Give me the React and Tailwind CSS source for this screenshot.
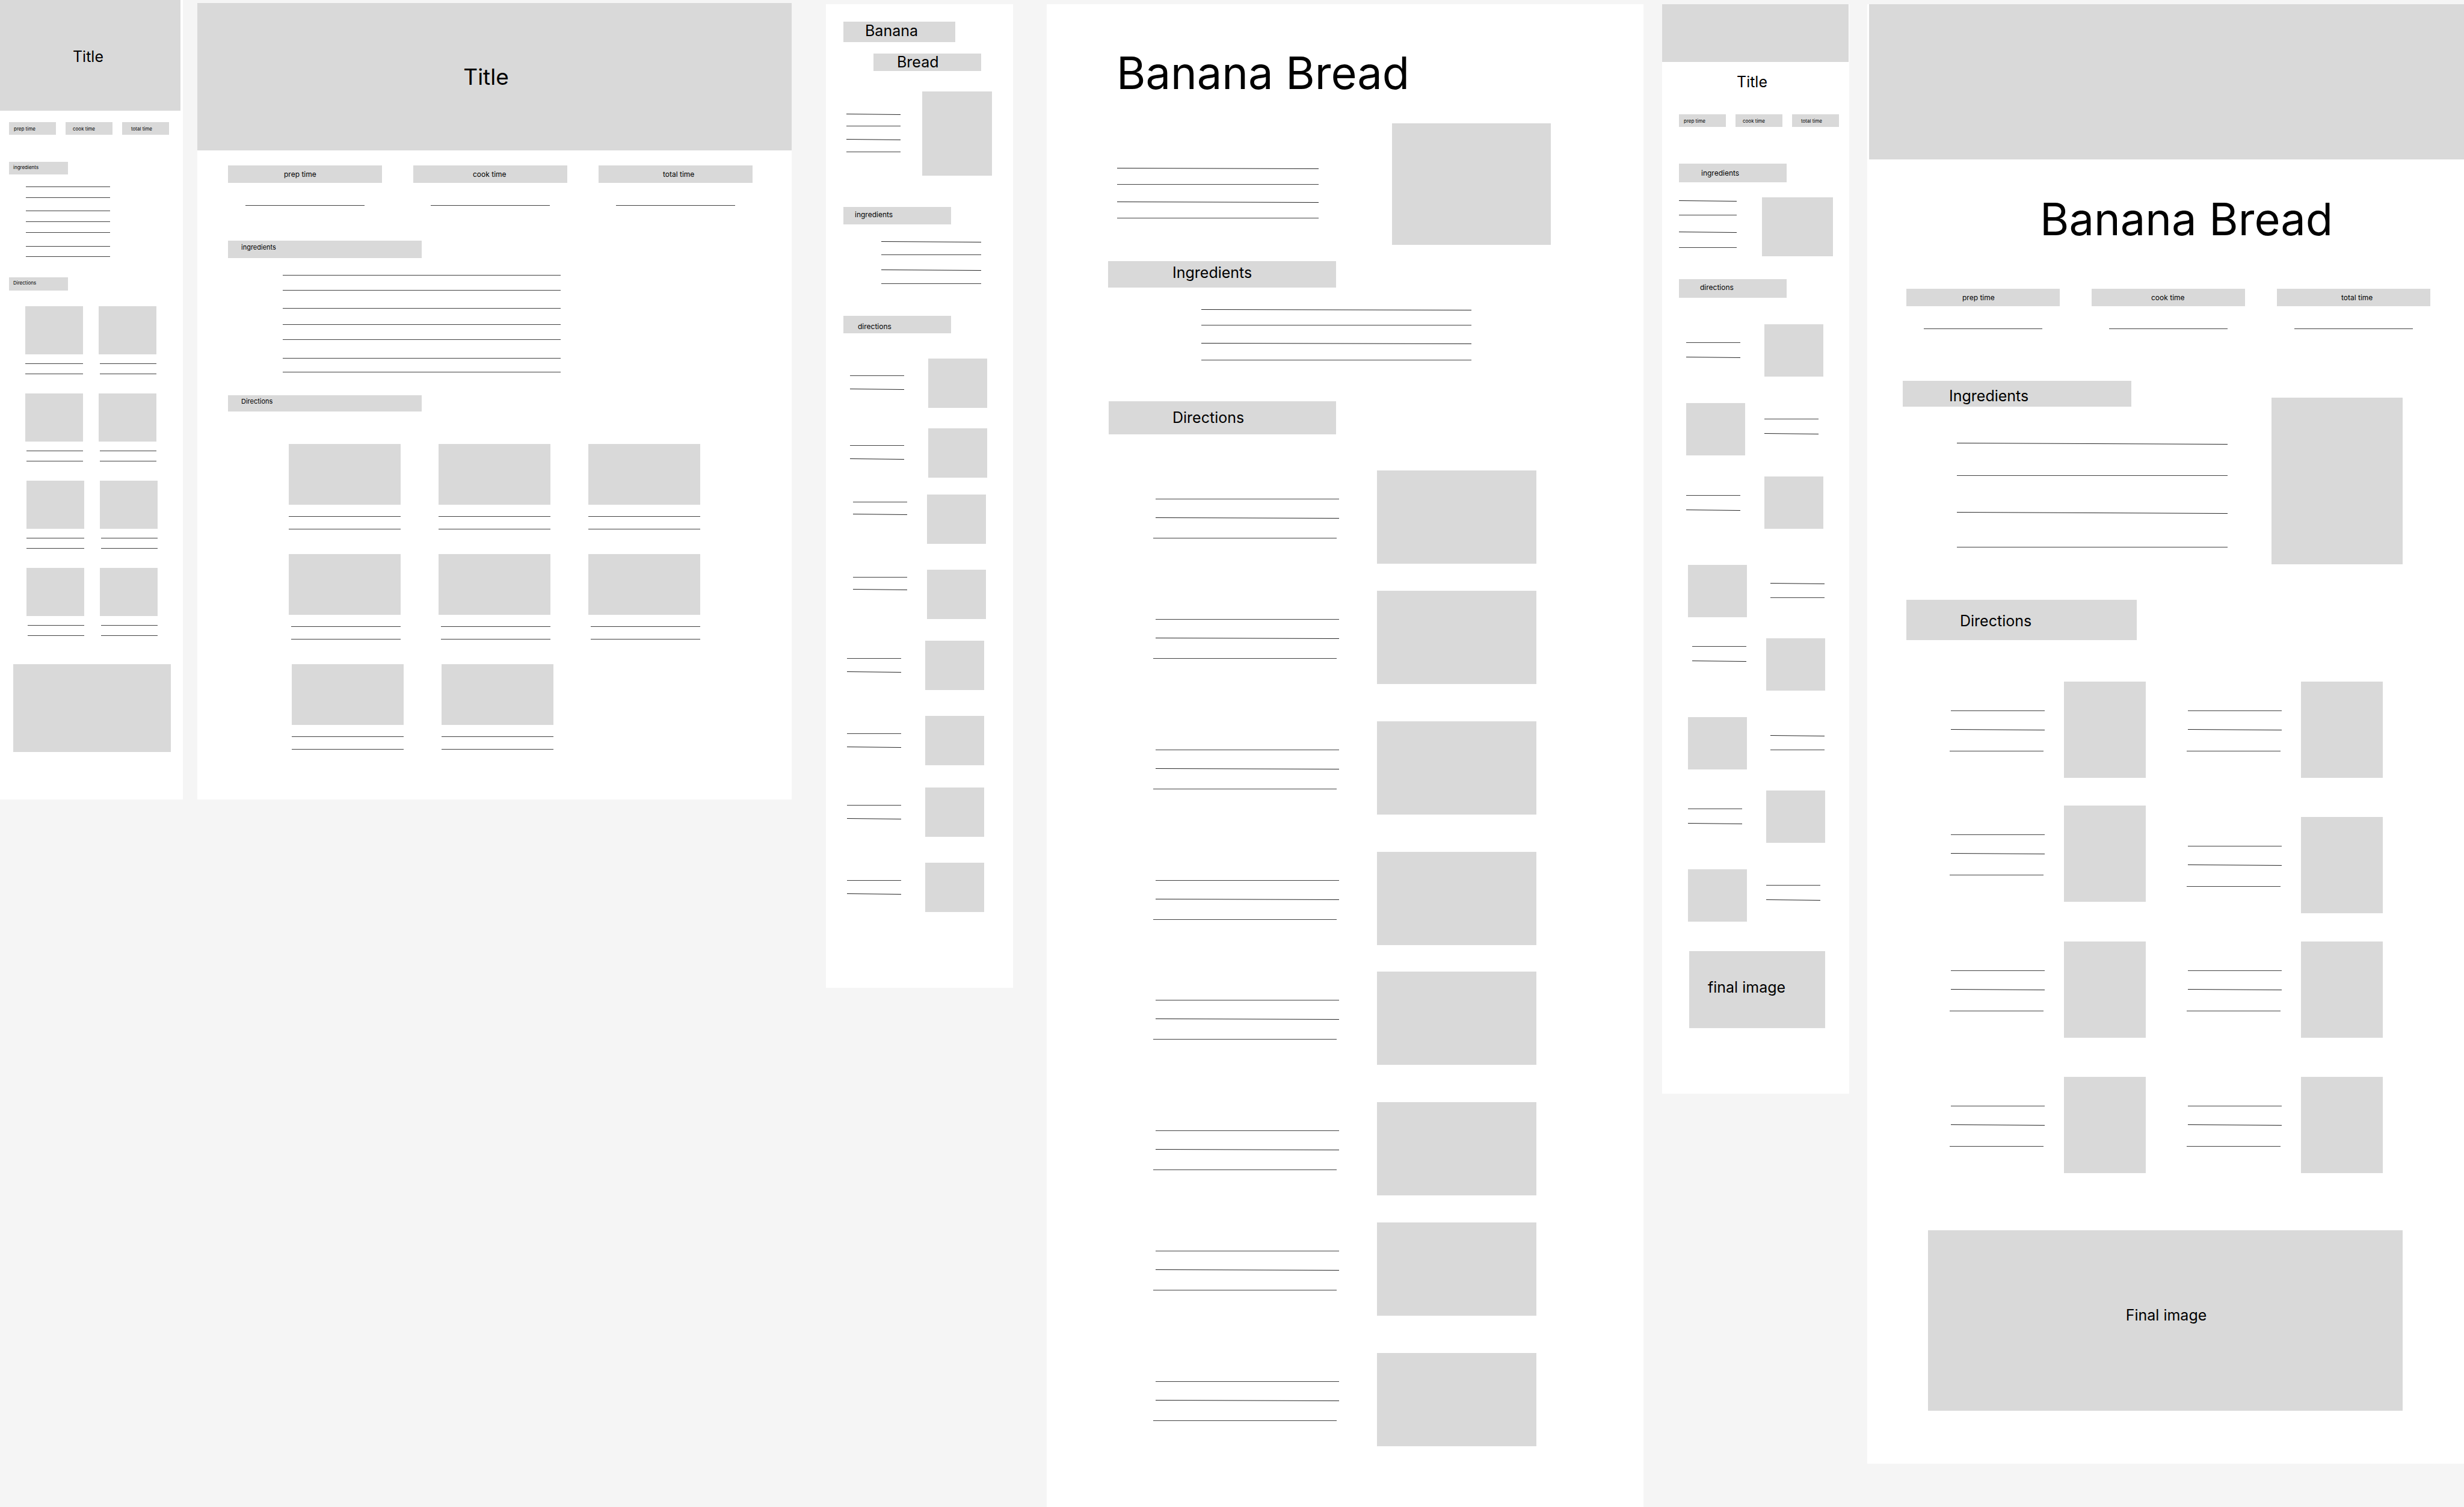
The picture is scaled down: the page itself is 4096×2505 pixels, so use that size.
import React from "react";
import clsx from "clsx";

/* A hand-drawn text line: straight by default, slightly falling when tilted. */
function Rule({ tilted, steep, className }) {
  if (!tilted) return <div className={clsx("h-[2px] border-t border-[#404040]", className)} />;
  return (
    <div className={className}>
      <svg
        className="block h-[2px] w-full overflow-visible"
        viewBox="0 0 100 2"
        preserveAspectRatio="none"
        aria-hidden="true"
      >
        <line
          x1="0"
          y1="0.5"
          x2="100"
          y2={steep ? 2.5 : 1.5}
          stroke="#262626"
          strokeWidth="1"
          vectorEffect="non-scaling-stroke"
        />
      </svg>
    </div>
  );
}

/* A stack of text lines; `lines` holds the spacing classes of each one. */
function Rules({ lines, tilted = [], steep = false, className }) {
  return (
    <div className={className}>
      {lines.map((line, i) => (
        <Rule key={i} className={line} tilted={tilted.includes(i)} steep={steep} />
      ))}
    </div>
  );
}

function Block({ className }) {
  return <div className={clsx("shrink-0 bg-[#d9d9d9]", className)} />;
}

function Bar({ as: Tag = "h2", className, children }) {
  return (
    <Tag className={clsx("flex items-center bg-[#d9d9d9] leading-none whitespace-nowrap", className)}>
      {children}
    </Tag>
  );
}

function Board({ className, label, children }) {
  return (
    <article aria-label={label} className={clsx("bg-white", className)}>
      {children}
    </article>
  );
}

function SmallTimes({ className }) {
  return (
    <div className={clsx("grid grid-cols-3 gap-[16px] text-[8px]", className)}>
      <Bar as="p" className="h-[21px] pl-[8px]">prep time</Bar>
      <Bar as="p" className="h-[21px] pl-[12px]">cook time</Bar>
      <Bar as="p" className="h-[21px] pl-[15px]">total time</Bar>
    </div>
  );
}

function WideTimes({ className }) {
  const times = [
    ["prep time", "pl-[93px]"],
    ["cook time", "pl-[99px]"],
    ["total time", "pl-[107px]"],
  ];
  return (
    <div className={clsx("grid grid-cols-3 text-[12px]", className)}>
      {times.map(([name, pad]) => (
        <div key={name}>
          <Bar as="p" className={clsx("h-[29px]", pad)}>{name}</Bar>
          <Rule className="mx-[29px] mt-[37px]" />
        </div>
      ))}
    </div>
  );
}

/* ---------- picture cards with two lines below ---------- */

function SmallCard({ inset }) {
  return (
    <div>
      <Block className="h-[80px]" />
      <Rules className={clsx("mt-[15px]", inset && "pl-[2px]")} lines={["", "mt-[15px]"]} />
    </div>
  );
}

function WideCard({ inset }) {
  return (
    <div>
      <Block className="h-[101px]" />
      <Rules className={clsx("mt-[19px]", inset && "pl-[4px]")} lines={["", "mt-[19px]"]} />
    </div>
  );
}

function PhoneCards() {
  const rows = [
    { place: "ml-[42px] mr-[44px]", inset: [false, true] },
    { place: "ml-[42px] mr-[44px]", inset: [true, true] },
    { place: "ml-[44px] mr-[42px]", inset: [false, true] },
    { place: "ml-[44px] mr-[42px]", inset: [true, true] },
  ];
  return (
    <div className="mt-[26px] flex flex-col gap-[31px]">
      {rows.map((row, i) => (
        <div key={i} className={clsx("grid grid-cols-2 gap-[26px]", row.place)}>
          {row.inset.map((inset, j) => (
            <SmallCard key={j} inset={inset} />
          ))}
        </div>
      ))}
    </div>
  );
}

function DesktopCards() {
  const rows = [
    { place: "mx-[152px]", count: 3, inset: false },
    { place: "mx-[152px]", count: 3, inset: true },
    { place: "ml-[157px] mr-[147px]", count: 2, inset: false },
  ];
  return (
    <div className="mt-[54px] flex flex-col gap-[40px]">
      {rows.map((row, i) => (
        <div key={i} className={clsx("grid grid-cols-3 gap-[63px]", row.place)}>
          {Array.from({ length: row.count }, (_, j) => (
            <WideCard key={j} inset={row.inset} />
          ))}
        </div>
      ))}
    </div>
  );
}

/* ---------- boards ---------- */

function PhoneOne() {
  return (
    <Board label="Phone layout 1" className="pb-[79px]">
      <header className="mr-[4px] flex h-[184px] items-center justify-center bg-[#d9d9d9] pt-[5px] pr-[7px]">
        <h1 className="text-[25px] leading-none">Title</h1>
      </header>
      <SmallTimes className="mt-[19px] mr-[23px] ml-[15px]" />
      <Bar className="mt-[45px] ml-[15px] h-[21px] w-[98px] pb-[3px] pl-[7px] text-[8px]">ingredients</Bar>
      <Rules
        className="mt-[20px] mr-[121px] ml-[43px]"
        lines={["", "mt-[16px]", "mt-[20px]", "mt-[16px]", "mt-[16px]", "mt-[21px]", "mt-[15px]"]}
      />
      <Bar className="mt-[33px] ml-[15px] h-[22px] w-[98px] pb-[4px] pl-[7px] text-[8px]">Directions</Bar>
      <PhoneCards />
      <Block className="mt-[46px] mr-[20px] ml-[22px] h-[146px]" />
    </Board>
  );
}

function DesktopOne() {
  return (
    <Board label="Desktop layout 1" className="mt-[5px] ml-[24px] pb-[82px]">
      <header className="flex h-[245px] items-center justify-center bg-[#d9d9d9] pr-[28px]">
        <h1 className="text-[37px] leading-none">Title</h1>
      </header>
      <WideTimes className="mt-[25px] mr-[65px] ml-[51px] gap-x-[52px]" />
      <Bar className="mt-[57px] ml-[51px] h-[29px] w-[322px] pb-[6px] pl-[22px] text-[11px]">ingredients</Bar>
      <Rules
        className="mt-[28px] mr-[384px] ml-[142px]"
        lines={["", "mt-[23px]", "mt-[28px]", "mt-[25px]", "mt-[23px]", "mt-[29px]", "mt-[21px]"]}
      />
      <Bar className="mt-[37px] ml-[51px] h-[27px] w-[322px] pb-[6px] pl-[22px] text-[11px]">Directions</Bar>
      <DesktopCards />
    </Board>
  );
}

function PhoneTwo() {
  const steps = [
    { row: "", rules: "ml-[40px] pt-[28px]", second: "mt-[20px]", image: "ml-[40px]" },
    { row: "mt-[34px]", rules: "ml-[40px] pt-[28px]", second: "mt-[20px]", image: "ml-[40px]" },
    { row: "mt-[28px]", rules: "ml-[45px] pt-[12px]", second: "mt-[18px]", image: "ml-[33px]" },
    { row: "mt-[43px]", rules: "ml-[45px] pt-[12px]", second: "mt-[18px]", image: "ml-[33px]" },
    { row: "mt-[36px]", rules: "ml-[35px] pt-[29px]", second: "mt-[20px]", image: "ml-[40px]" },
    { row: "mt-[43px]", rules: "ml-[35px] pt-[29px]", second: "mt-[20px]", image: "ml-[40px]" },
    { row: "mt-[37px]", rules: "ml-[35px] pt-[29px]", second: "mt-[20px]", image: "ml-[40px]" },
    { row: "mt-[43px]", rules: "ml-[35px] pt-[29px]", second: "mt-[20px]", image: "ml-[40px]" },
  ];
  return (
    <Board label="Phone layout 2" className="mt-[7px] ml-[57px] pt-[29px] pb-[126px]">
      <h1 className="text-[25px]">
        <Bar as="span" className="ml-[29px] h-[34px] w-[186px] pb-[3px] pl-[36px]">Banana</Bar>
        <Bar as="span" className="mt-[19px] ml-[79px] h-[29px] w-[179px] pl-[39px]">Bread</Bar>
      </h1>
      <div className="mt-[34px] flex">
        <Rules
          className="ml-[34px] w-[90px] pt-[37px]"
          lines={["", "mt-[18px]", "mt-[20px]", "mt-[19px]"]}
          tilted={[0, 2]}
        />
        <Block className="ml-[36px] h-[140px] w-[116px]" />
      </div>
      <Bar className="mt-[52px] ml-[29px] h-[29px] w-[179px] pb-[4px] pl-[19px] text-[12px]">ingredients</Bar>
      <Rules
        className="mt-[28px] ml-[92px] w-[166px]"
        lines={["", "mt-[20px]", "mt-[23px]", "mt-[21px]"]}
        tilted={[0, 2]}
      />
      <Bar className="mt-[52px] ml-[29px] h-[29px] w-[179px] pt-[6px] pl-[24px] text-[12px]">directions</Bar>
      <div className="mt-[42px]">
        {steps.map((step, i) => (
          <div key={i} className={clsx("flex", step.row)}>
            <Rules className={clsx("box-content w-[90px]", step.rules)} lines={["", step.second]} tilted={[1]} />
            <Block className={clsx("h-[82px] w-[98px]", step.image)} />
          </div>
        ))}
      </div>
    </Board>
  );
}

function DesktopTwo() {
  const rows = ["", "mt-[45px]", "mt-[62px]", "mt-[62px]", "mt-[44px]", "mt-[62px]", "mt-[45px]", "mt-[62px]"];
  return (
    <Board label="Desktop layout 2" className="mt-[7px] ml-[56px] pt-[77px] pb-[101px]">
      <h1 className="ml-[116px] text-[74px] leading-none">Banana Bread</h1>
      <div className="mt-[47px] flex">
        <Rules
          className="ml-[117px] w-[335px] pt-[74px]"
          lines={["", "mt-[25px]", "mt-[27px]", "mt-[25px]"]}
          tilted={[0, 2]}
        />
        <Block className="ml-[122px] h-[202px] w-[264px]" />
      </div>
      <Bar className="mt-[27px] ml-[102px] h-[44px] w-[379px] pb-[5px] pl-[107px] text-[25px]">Ingredients</Bar>
      <Rules
        className="mt-[36px] ml-[257px] w-[449px]"
        lines={["", "mt-[24px]", "mt-[28px]", "mt-[26px]"]}
        tilted={[0, 2]}
      />
      <Bar className="mt-[67px] ml-[103px] h-[55px] w-[378px] pl-[106px] text-[25px]">Directions</Bar>
      <div className="mt-[60px]">
        {rows.map((row, i) => (
          <div key={i} className={clsx("flex", row)}>
            <Rules
              className="ml-[177px] w-[309px] pt-[47px]"
              lines={["ml-[4px]", "mt-[29px] ml-[4px]", "mt-[32px] mr-[4px]"]}
              tilted={[1]}
            />
            <Block className="ml-[63px] h-[155px] w-[265px]" />
          </div>
        ))}
      </div>
    </Board>
  );
}

function PhoneThree() {
  const steps = [
    { row: "", rules: "ml-[40px] pt-[30px]", image: "ml-[40px]", tilted: [1] },
    { row: "mt-[44px]", flip: true, rules: "ml-[32px] pt-[26px]", image: "ml-[40px]", tilted: [1] },
    { row: "mt-[35px]", rules: "ml-[40px] pt-[31px]", image: "ml-[40px]", tilted: [1] },
    { row: "mt-[60px]", flip: true, rules: "ml-[39px] pt-[30px]", image: "ml-[43px]", tilted: [0] },
    { row: "mt-[35px]", rules: "ml-[50px] pt-[13px]", image: "ml-[33px]", tilted: [1] },
    { row: "mt-[44px]", flip: true, rules: "ml-[39px] pt-[30px]", image: "ml-[43px]", tilted: [0] },
    { row: "mt-[35px]", rules: "ml-[43px] pt-[30px]", image: "ml-[40px]", tilted: [1] },
    { row: "mt-[44px]", flip: true, rules: "ml-[32px] pt-[26px]", image: "ml-[43px]", tilted: [1] },
  ];
  return (
    <Board label="Phone layout 3" className="mt-[7px] ml-[31px] pb-[109px]">
      <Block className="mr-[1px] h-[96px]" />
      <h1 className="mt-[21px] ml-[124px] text-[25px] leading-none">Title</h1>
      <SmallTimes className="mt-[41px] mr-[17px] ml-[28px]" />
      <Bar className="mt-[61px] ml-[28px] h-[31px] w-[179px] pl-[37px] text-[12px]">ingredients</Bar>
      <div className="mt-[25px] flex">
        <Rules
          className="ml-[28px] w-[96px] pt-[5px]"
          lines={["", "mt-[22px]", "mt-[26px]", "mt-[24px]"]}
          tilted={[0, 2]}
        />
        <Block className="ml-[42px] h-[98px] w-[118px]" />
      </div>
      <Bar className="mt-[38px] ml-[28px] h-[31px] w-[179px] pb-[3px] pl-[35px] text-[12px]">directions</Bar>
      <div className="mt-[44px]">
        {steps.map((step, i) => {
          const rules = (
            <Rules
              key="rules"
              className={clsx("box-content w-[90px]", step.rules)}
              lines={["", "mt-[22px]"]}
              tilted={step.tilted}
            />
          );
          const image = <Block key="image" className={clsx("h-[87px] w-[98px]", step.image)} />;
          return (
            <div key={i} className={clsx("flex", step.row)}>
              {step.flip ? [image, rules] : [rules, image]}
            </div>
          );
        })}
      </div>
      <Bar as="p" className="mt-[49px] mr-[40px] ml-[45px] h-[128px] pb-[8px] pl-[31px] text-[25px]">
        final image
      </Bar>
    </Board>
  );
}

function DesktopThree() {
  const columns = [
    ["", "mt-[46px]", "mt-[66px]", "mt-[65px]"],
    ["", "mt-[65px]", "mt-[47px]", "mt-[65px]"],
  ];
  return (
    <Board label="Desktop layout 3" className="mt-[7px] ml-[30px] pb-[88px]">
      <Block className="ml-[3px] h-[258px]" />
      <h1 className="mt-[62px] ml-[287px] text-[74px] leading-none whitespace-nowrap">Banana Bread</h1>
      <WideTimes className="mt-[79px] mr-[56px] ml-[65px] gap-x-[53px]" />
      <div className="mt-[85px] flex">
        <div>
          <Bar className="ml-[59px] h-[43px] w-[380px] pt-[7px] pl-[77px] text-[25px]">Ingredients</Bar>
          <Rules
            className="mt-[60px] ml-[149px] w-[450px]"
            lines={["", "mt-[52px]", "mt-[59px]", "mt-[56px]"]}
            tilted={[0, 2]}
            steep
          />
        </div>
        <Block className="mt-[28px] ml-[73px] h-[277px] w-[218px]" />
      </div>
      <Bar className="mt-[59px] ml-[65px] h-[67px] w-[383px] pt-[3px] pl-[89px] text-[25px]">Directions</Bar>
      <div className="mt-[69px] ml-[137px] flex gap-[68px]">
        {columns.map((rows, c) => (
          <div key={c}>
            {rows.map((row, i) => (
              <div key={i} className={clsx("flex", row)}>
                <Rules
                  className="w-[158px] pt-[48px]"
                  lines={["ml-[2px]", "mt-[29px] ml-[2px]", "mt-[34px] mr-[2px]"]}
                  tilted={[1]}
                />
                <Block className="ml-[32px] h-[160px] w-[136px]" />
              </div>
            ))}
          </div>
        ))}
      </div>
      <Bar as="p" className="mt-[95px] mr-[102px] ml-[101px] h-[300px] justify-center pb-[18px] pl-[3px] text-[25px]">
        Final image
      </Bar>
    </Board>
  );
}

export default function App() {
  return (
    <main className="grid min-h-screen grid-cols-[304fr_1012fr_368fr_1048fr_342fr_1022fr] items-start bg-[#f5f5f5] font-['Inter',sans-serif] text-black">
      <PhoneOne />
      <DesktopOne />
      <PhoneTwo />
      <DesktopTwo />
      <PhoneThree />
      <DesktopThree />
    </main>
  );
}
